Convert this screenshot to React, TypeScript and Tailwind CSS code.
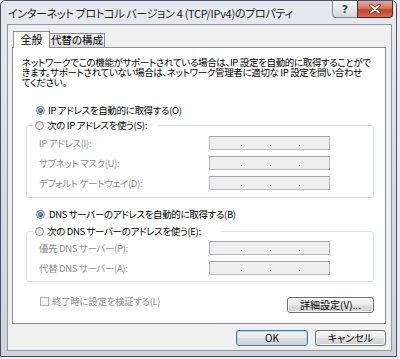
import type { ReactNode } from 'react'

/* Win7 "インターネット プロトコル バージョン 4" のプロパティ ダイアログ。 */
const jp = "font-['Noto_Sans_CJK_JP',sans-serif] [font-feature-settings:'palt']"
const body = 'text-[9.5px] tracking-[-0.35px]'

const btnFace =
  'bg-[linear-gradient(to_bottom,#f4f4f4_0%,#ececec_48%,#dedede_52%,#d0d0d0_100%)]'

function Radio({ checked }: { checked?: boolean }) {
  return (
    <span className="flex h-[9px] w-[9px] shrink-0 items-center justify-center rounded-full border border-[#8c8e8f] bg-linear-to-br from-[#d8d8d8] to-[#fbfbfb]">
      {checked && (
        <span className="h-[5px] w-[5px] rounded-full bg-[radial-gradient(circle_at_40%_35%,#7fb6f0,#1f5bb0_70%)]" />
      )}
    </span>
  )
}

function IpBox() {
  return (
    <div className="flex h-[14px] w-[121px] items-end gap-[28px] border border-[#b8babd] border-t-[#a6a8ab] bg-[#efefef] pb-[3px] pl-[31px]">
      <span className="h-[1px] w-[1px] bg-[#8a8a8a]" />
      <span className="h-[1px] w-[1px] bg-[#8a8a8a]" />
      <span className="h-[1px] w-[1px] bg-[#8a8a8a]" />
    </div>
  )
}

function Field({ label }: { label: string }) {
  return (
    <div className="flex h-[14px] items-center">
      <span className={`w-[170px] leading-[14px] text-[#8d8d8d] ${body}`}>{label}</span>
      <IpBox />
    </div>
  )
}

function Group({
  legend,
  legendPad,
  className,
  children,
}: {
  legend: string
  legendPad: string
  className: string
  children: ReactNode
}) {
  return (
    <div className={`relative ml-[13px] w-[348px] rounded-[3px] border border-[#d5dfe5] ${className}`}>
      <div className={`absolute -top-[7px] left-[6px] flex h-[12px] items-center gap-[3px] bg-white pl-[2px] ${legendPad}`}>
        <Radio />
        <span className={`leading-[12px] text-black ${body}`}>{legend}</span>
      </div>
      <div className="flex flex-col gap-[6px] pl-[12px]">{children}</div>
    </div>
  )
}

function Button({ label, def, className }: { label: string; def?: boolean; className: string }) {
  return (
    <button
      type="button"
      className={`flex h-[16px] items-center justify-center rounded-[3px] border text-[10px] leading-none text-black ${btnFace} ${
        def ? 'border-[#3c7fb1] shadow-[inset_0_0_0_1px_#a8d8f2]' : 'border-[#707070] shadow-[inset_0_0_0_1px_#fbfbfb]'
      } ${className}`}
    >
      {label}
    </button>
  )
}

export default function App() {
  return (
    <div className={`h-[359px] w-[400px] overflow-hidden bg-[#e9ebef] ${jp}`}>
      <div className="flex h-[357px] w-[397px] flex-col rounded-t-[5px] border border-[#4a5069] bg-linear-to-b from-[#e6e9ed] via-[#d9dde2] to-[#cfd4da]">
        {/* タイトルバー */}
        <div className="flex h-[23px] items-start justify-between">
          <span className="min-w-0 whitespace-nowrap pl-[7px] pt-[5px] text-[11px] leading-[14px] tracking-[-0.3px] text-[#1a1a1a]">
            インターネット プロトコル バージョン 4 (TCP/IPv4)のプロパティ
          </span>
          <div className="mr-[3px] flex shrink-0">
            <span className="flex h-[17px] w-[25px] items-center justify-center rounded-bl-[4px] border border-r-0 border-t-0 border-[#7d8795] bg-linear-to-b from-[#f6f7f9] via-[#e4e8ed] to-[#cfd6de] font-['DejaVu_Sans',sans-serif] text-[11px] font-bold leading-none text-[#3a3f48] [text-shadow:0_0_2px_#fff]">
              ?
            </span>
            <span className="flex h-[17px] w-[36px] items-center justify-center rounded-br-[4px] border border-t-0 border-[#5b2a25] bg-[linear-gradient(to_bottom,#e9a591_0%,#d8765f_45%,#c3412b_55%,#d56a4c_100%)]">
              <svg width="12" height="10" viewBox="0 0 12 10">
                <path d="M2 1.5 L10 8.5 M10 1.5 L2 8.5" stroke="#5a2018" strokeWidth="3.6" strokeLinecap="round" />
                <path d="M2 1.5 L10 8.5 M10 1.5 L2 8.5" stroke="#ffffff" strokeWidth="2" strokeLinecap="round" />
              </svg>
            </span>
          </div>
        </div>

        {/* クライアント領域 */}
        <div className="ml-[6px] mr-[4px] flex h-[327px] flex-col border border-[#8d97a4] bg-[#f0f0f0]">
          <div className="relative z-10 -mb-[1px] ml-[5px] flex h-[23px] items-end pt-[6px]">
            <span className="flex h-[17px] w-[37px] items-center justify-center border border-b-0 border-[#898c95] bg-white pb-[1px] text-[11px] leading-none text-black">
              全般
            </span>
            <span className="mb-[1px] flex h-[14px] w-[55px] items-center justify-center border border-b-0 border-l-0 border-[#898c95] bg-linear-to-b from-[#f3f3f3] to-[#dcdcdc] text-[10.5px] leading-none text-black">
              代替の構成
            </span>
          </div>

          <div className="ml-[4px] flex h-[277px] w-[374px] flex-col border border-[#898c95] bg-white">
            <p className={`mt-[9px] whitespace-nowrap pl-[9px] leading-[10px] text-black ${body}`}>
              ネットワークでこの機能がサポートされている場合は、IP 設定を自動的に取得することがで
              <br />
              きます。サポートされていない場合は、ネットワーク管理者に適切な IP 設定を問い合わせ
              <br />
              てください。
            </p>

            <div className="mt-[17px] flex h-[12px] items-center gap-[3px] pl-[23px]">
              <Radio checked />
              <span className={`leading-[12px] text-black ${body}`}>IP アドレスを自動的に取得する(O)</span>
            </div>

            <Group legend="次の IP アドレスを使う(S):" legendPad="pr-[11px]" className="mt-[9px] h-[73px] pt-[10px]">
              <Field label="IP アドレス(I):" />
              <Field label="サブネット マスク(U):" />
              <Field label="デフォルト ゲートウェイ(D):" />
            </Group>

            <div className="mt-[10px] flex h-[12px] items-center gap-[4px] pl-[23px]">
              <Radio checked />
              <span className={`leading-[12px] text-black ${body}`}>DNS サーバーのアドレスを自動的に取得する(B)</span>
            </div>

            <Group legend="次の DNS サーバーのアドレスを使う(E):" legendPad="pr-[20px]" className="mt-[11px] h-[51px] pt-[9px]">
              <Field label="優先 DNS サーバー(P):" />
              <Field label="代替 DNS サーバー(A):" />
            </Group>

            <div className="mt-[13px] flex items-start justify-between pl-[27px] pr-[11px]">
              <div className="flex h-[12px] items-center gap-[3px]">
                <span className="h-[9px] w-[9px] border border-[#b1b1b1] bg-[#f4f4f4]" />
                <span className={`leading-[12px] text-[#8d8d8d] ${body}`}>終了時に設定を検証する(L)</span>
              </div>
              <Button label="詳細設定(V)..." className="mt-[2px] w-[87px]" />
            </div>
          </div>

          <div className="mt-[6px] flex justify-end gap-[7px] pr-[5px]">
            <Button label="OK" def className="w-[72px]" />
            <Button label="キャンセル" className="w-[71px]" />
          </div>
        </div>
      </div>
    </div>
  )
}
